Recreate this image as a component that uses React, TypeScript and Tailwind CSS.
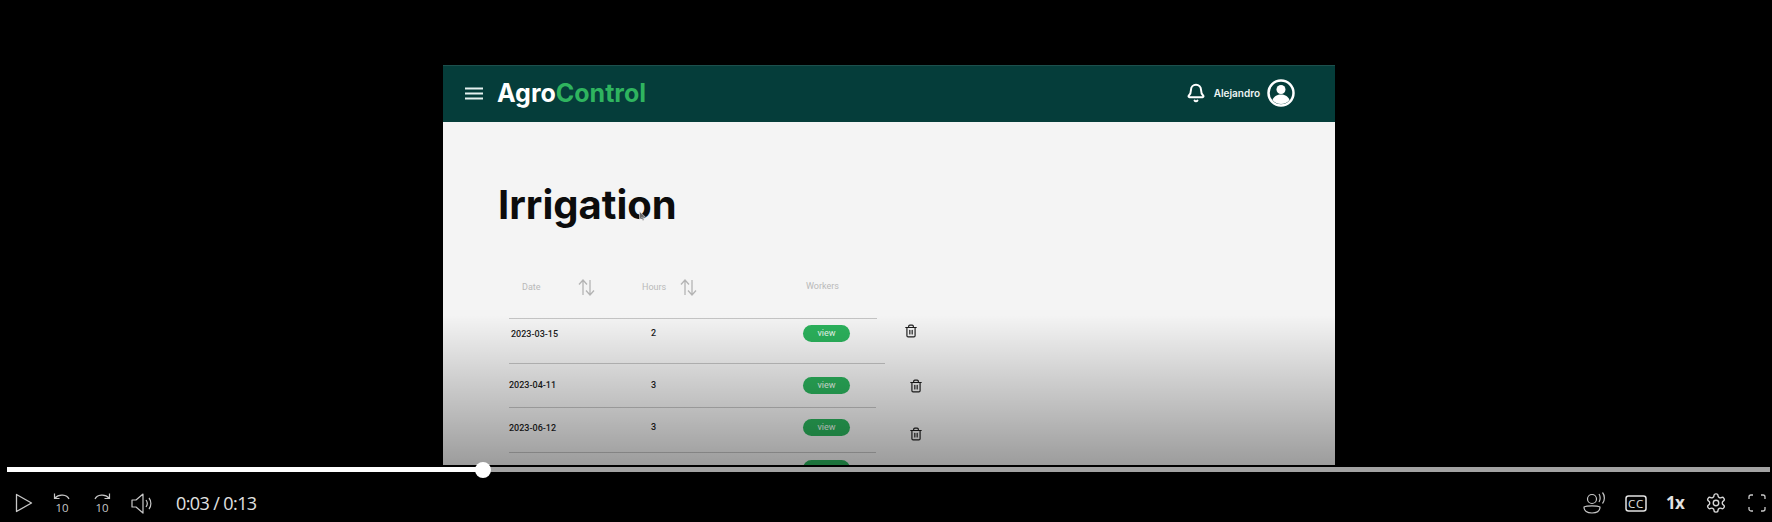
import React from 'react';
import { Bell, Trash2 } from 'lucide-react';

const rows = [
  { date: '2023-03-15', hours: '2', h: 'h-[44px]', line: 'w-[368px]', pad: 'pl-[2px] pt-[3px]', trash: 'ml-[54px] -mt-[1px]', mt: 'pt-[6px]' },
  { date: '2023-04-11', hours: '3', h: 'h-[43px]', line: 'w-[376px]', pad: 'pt-[2px]', trash: 'ml-[59px] mt-[2px]', mt: 'pt-[13px]' },
  { date: '2023-06-12', hours: '3', h: 'h-[44px]', line: 'w-[367px]', pad: 'pt-[3px]', trash: 'ml-[59px] mt-[8px]', mt: 'pt-[11px]' },
];

const SortIcon = () => (
  <svg width="17" height="17" viewBox="0 0 17 17" fill="none" stroke="#b4b4b4" strokeWidth="1.3">
    <path d="M5 16V1M1 5.500 5 1l4 4.500M12 1v15M8 11.500l4 4.500 4-4.500" />
  </svg>
);

const SkipIcon = ({ flip }: { flip?: boolean }) => (
  <svg width="20" height="25" viewBox="0 0 20 25" fill="none" stroke="#c8c8c8" strokeWidth="1.2">
    {flip ? <path d="M3 7C5 2.500 13 1.500 17 6M17.500 1.500V6.500H12.500" /> : <path d="M17 7C15 2.500 7 1.500 3 6M2.500 1.500V6.500H7.500" />}
    <text x="10" y="20" textAnchor="middle" fontSize="11.500" fill="#c8c8c8" stroke="none" fontFamily="Open Sans, sans-serif">10</text>
  </svg>
);

export default function App() {
  return (
    <div className="relative h-[522px] w-[1772px] overflow-hidden bg-black font-['Inter',sans-serif]">
      <div className="h-[467px] pl-[443px] pt-[65px]">
        <div className="relative h-[400px] w-[892px] overflow-hidden bg-[#f4f4f4]">
          <header className="flex h-[57px] items-center border-t border-[#1d504d] bg-[#053d3a] pb-[2px] pl-[22px] pr-[40px] text-white">
            <svg width="18" height="13" viewBox="0 0 18 13" fill="none" stroke="#e6f2f0" strokeWidth="2">
              <path d="M0 1.500h18M0 6.500h18M0 11.500h18" />
            </svg>
            <div className="ml-[14px] text-[25px] leading-none font-bold">
              Agro<span className="text-[#2fb45f]">Control</span>
            </div>
            <Bell size={20} strokeWidth={2.4} className="ml-auto text-white" />
            <span className="ml-[8px] text-[10px] font-semibold text-[#eef5f4]">Alejandro</span>
            <svg className="ml-[7px]" width="28" height="28" viewBox="0 0 28 28">
              <circle cx="14" cy="14" r="12.500" fill="none" stroke="#fff" strokeWidth="2.500" />
              <circle cx="14" cy="10.500" r="4.500" fill="#fff" />
              <path d="M5.500 21c1.500-4 5-5.500 8.500-5.500s7 1.500 8.500 5.500c-2 2.500-5 4-8.500 4s-6.500-1.500-8.500-4Z" fill="#fff" />
            </svg>
          </header>

          <h1 className="mt-[55px] ml-[55px] text-[40px] leading-[56px] font-bold text-[#0c0c0c]">Irrigation</h1>

          <div className="mt-[37px] ml-[66px] font-['Roboto',sans-serif]">
            <div className="flex h-[48px] items-start pt-[9px] text-[9px] text-[#b9b9b9]">
              <span className="ml-[13px] w-[56px] pt-[2px]">Date</span>
              <SortIcon />
              <span className="ml-[47px] w-[38px] pt-[2px]">Hours</span>
              <SortIcon />
              <span className="ml-[109px] pt-[1px]">Workers</span>
            </div>
            {rows.map((r) => (
              <div key={r.date}>
                <div className={`h-px bg-[#c4c4c4] ${r.line}`} />
                <div className={`flex items-start ${r.h} ${r.mt} text-[9px] font-medium text-[#1c1c1c]`}>
                  <span className={`w-[142px] ${r.pad}`}>{r.date}</span>
                  <span className="w-[152px] pt-[2px]">{r.hours}</span>
                  <span className="flex h-[17px] w-[47px] items-center justify-center rounded-full bg-[#2bb25c] text-[9px] font-normal text-[#e8f7ec]">view</span>
                  <Trash2 size={14} strokeWidth={2} className={`${r.trash} text-[#1c1c1c]`} />
                </div>
              </div>
            ))}
            <div className="h-px w-[367px] bg-[#c4c4c4]" />
            <div className="mt-[7px] ml-[294px] h-[17px] w-[47px] rounded-full bg-[#2bb25c]" />
          </div>

          <div className="absolute inset-x-0 bottom-0 h-[150px] bg-linear-to-b from-transparent to-black/36" />
          {/* mouse pointer caught in the recording */}
          <svg className="absolute top-[146px] left-[196px]" width="7" height="10" viewBox="0 0 7 10">
            <path d="M0.500 0.500v8l2-1.800 1.300 2.800 1.300-.6-1.300-2.700h2.700Z" fill="#6a6a6a" stroke="#e8e8e8" strokeWidth="0.600" />
          </svg>
        </div>
      </div>

      <div className="relative mx-[7px] flex h-[5px] w-[1763px] bg-[#a3a3a3]">
        <div className="h-full w-[476px] bg-white" />
        <div className="absolute top-[-5.500px] left-[468px] h-[16px] w-[16px] rounded-full bg-white" />
      </div>

      <div className="mt-[6px] flex h-[50px] items-center pl-[15px] text-[#c8c8c8]">
        <svg width="18" height="20" viewBox="0 0 18 20" fill="none" stroke="#c8c8c8" strokeWidth="1.3">
          <path d="M1.500 1.500 16.500 10 1.500 18.500Z" strokeLinejoin="round" />
        </svg>
        <div className="ml-[19px] pt-[3px]"><SkipIcon /></div>
        <div className="ml-[20px] pt-[3px]"><SkipIcon flip /></div>
        <svg className="ml-[19px]" width="22" height="21" viewBox="0 0 22 21" fill="none" stroke="#c8c8c8" strokeWidth="1.2">
          <path d="M1 7v7h4l7 6V1L5 7H1Z" strokeLinejoin="round" />
          <path d="M15 7c1.500 2 1.500 5 0 7M18 5c2.500 3 2.500 8 0 11" />
        </svg>
        <span className="ml-[23px] font-['Open_Sans',sans-serif] text-[18px] tracking-[-0.6px] text-[#e2e2e2]">0:03 / 0:13</span>

        <svg className="ml-auto" width="23" height="22" viewBox="0 0 23 22" fill="none" stroke="#c8c8c8" strokeWidth="1.2">
          <circle cx="9" cy="7" r="4.500" />
          <path d="M1 15c3-1.500 13-1.500 16 0 0 4-3 6-8 6s-8-2-8-6Z" />
          <path d="M16 2c1.500 2 1.500 6 0 8M19.500 .5c2.500 3 2.500 8 0 11" />
        </svg>
        <svg className="ml-[19px]" width="22" height="17" viewBox="0 0 22 17" fill="none" stroke="#e2e2e2" strokeWidth="1.500">
          <rect x="1" y="1" width="20" height="15" rx="2.500" />
          <text x="11" y="12.500" textAnchor="middle" fontSize="11.500" fill="#e2e2e2" stroke="none" letterSpacing="0.8" fontFamily="Open Sans, sans-serif">CC</text>
        </svg>
        <span className="ml-[19px] font-['Open_Sans',sans-serif] text-[17px] font-bold tracking-[-0.8px] text-[#e2e2e2]">1x</span>
        <svg className="ml-[21px]" width="22" height="22" viewBox="0 0 24 24" fill="none" stroke="#d6d6d6" strokeWidth="1.500" strokeLinecap="round" strokeLinejoin="round">
          <circle cx="12" cy="12" r="3" />
          <path d="M12.220 2h-.44a2 2 0 0 0-2 2v.18a2 2 0 0 1-1 1.730l-.43.25a2 2 0 0 1-2 0l-.15-.08a2 2 0 0 0-2.730.73l-.22.38a2 2 0 0 0 .73 2.730l.15.1a2 2 0 0 1 1 1.720v.51a2 2 0 0 1-1 1.740l-.15.09a2 2 0 0 0-.73 2.730l.22.38a2 2 0 0 0 2.730.73l.15-.08a2 2 0 0 1 2 0l.43.25a2 2 0 0 1 1 1.730V20a2 2 0 0 0 2 2h.44a2 2 0 0 0 2-2v-.18a2 2 0 0 1 1-1.730l.43-.25a2 2 0 0 1 2 0l.15.08a2 2 0 0 0 2.730-.73l.22-.39a2 2 0 0 0-.73-2.730l-.15-.08a2 2 0 0 1-1-1.740v-.5a2 2 0 0 1 1-1.740l.15-.09a2 2 0 0 0 .73-2.730l-.22-.38a2 2 0 0 0-2.730-.73l-.15.08a2 2 0 0 1-2 0l-.43-.25a2 2 0 0 1-1-1.730V4a2 2 0 0 0-2-2z" />
        </svg>
        <svg className="mr-[6px] ml-[21px]" width="18" height="18" viewBox="0 0 18 18" fill="none" stroke="#c8c8c8" strokeWidth="1.300">
          <path d="M1 5V3a2 2 0 0 1 2-2h2M13 1h2a2 2 0 0 1 2 2v2M17 13v2a2 2 0 0 1-2 2h-2M5 17H3a2 2 0 0 1-2-2v-2" />
        </svg>
      </div>
    </div>
  );
}
